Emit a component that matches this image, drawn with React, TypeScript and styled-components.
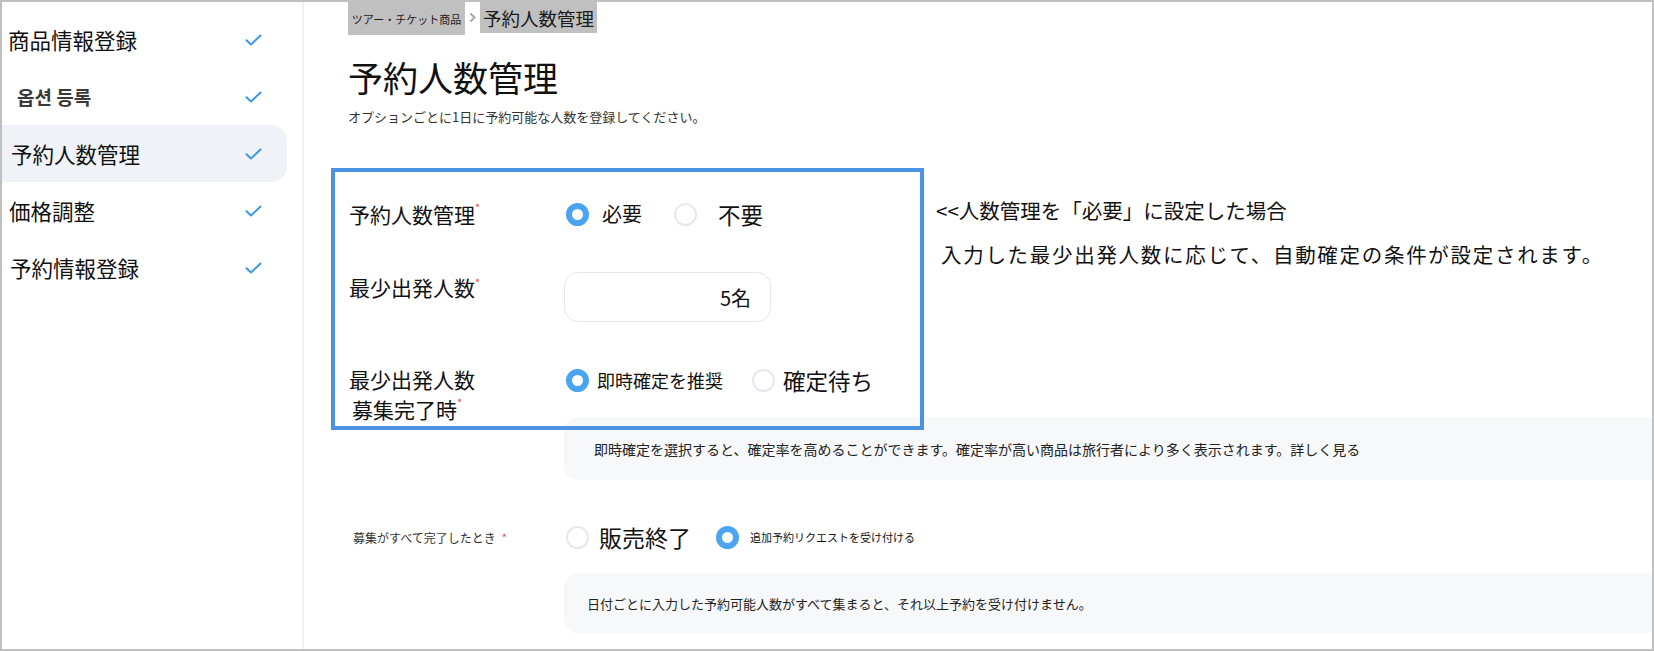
import styled, { createGlobalStyle } from 'styled-components';

// ============================================================================
// Global
// ============================================================================

const GlobalStyle = createGlobalStyle`
  html, body {
    margin: 0;
    padding: 0;
    background: #fff;
  }
  body {
    font-family: "Noto Sans CJK JP", "Noto Sans", sans-serif;
    color: #111;
  }
  * {
    box-sizing: border-box;
  }
`;

// ============================================================================
// Layout
// ============================================================================

const Screen = styled.div`
  width: 1654px;
  height: 651px;
  border: 2px solid #c0c0c0;
  display: flex;
  overflow: hidden;
  background: #fff;
`;

const Sidebar = styled.nav`
  width: 302px;
  flex-shrink: 0;
  border-right: 2px solid #eef1f5;
  padding-top: 9px;
`;

const NavItem = styled.div<{ $active?: boolean; $indent: number }>`
  width: 285px;
  height: 57px;
  display: flex;
  align-items: center;
  justify-content: space-between;
  padding: 0 25px 0 ${(p) => p.$indent}px;
  background: ${(p) => (p.$active ? '#eff2f6' : 'transparent')};
  border-radius: 0 16px 16px 0;
`;

const NavLabel = styled.span<{ $korean?: boolean }>`
  font-family: ${(p) =>
    p.$korean
      ? '"Noto Sans CJK KR", "Noto Sans", sans-serif'
      : '"Noto Sans CJK JP", "Noto Sans", sans-serif'};
  font-size: ${(p) => (p.$korean ? '19px' : '21.5px')};
  font-weight: ${(p) => (p.$korean ? 700 : 400)};
  color: ${(p) => (p.$korean ? '#3a3a3a' : '#111')};
  line-height: 1;
  white-space: pre;
`;

const Main = styled.main`
  flex: 1;
  min-width: 0;
  overflow: hidden;
  padding-left: 44px;
`;

// ============================================================================
// Header
// ============================================================================

const Breadcrumb = styled.div`
  display: flex;
  align-items: flex-start;
`;

const Crumb = styled.span<{ $size: number; $height: number; $width: number }>`
  display: flex;
  align-items: center;
  justify-content: center;
  width: ${(p) => p.$width}px;
  height: ${(p) => p.$height}px;
  background: #c0c0c0;
  font-size: ${(p) => p.$size}px;
  color: #1a1a1a;
  white-space: nowrap;
`;

const CrumbSep = styled.span`
  width: 15px;
  height: 31px;
  display: flex;
  align-items: center;
  justify-content: center;
`;

const Title = styled.h1`
  margin: 21px 0 0;
  font-size: 35px;
  font-weight: 400;
  line-height: 42px;
  color: #111;
`;

const Subtitle = styled.p`
  margin: 10px 0 0;
  font-size: 13px;
  line-height: 18px;
  color: #333;
`;

// ============================================================================
// Form
// ============================================================================

const TopSection = styled.div`
  display: flex;
  align-items: flex-start;
  margin-top: 42px;
`;

// Blue call-out frame drawn around the first three fields
const Highlight = styled.div`
  position: relative;
  z-index: 1;
  width: 593px;
  height: 262px;
  margin-left: -17px;
  padding: 24px 0 0 14px;
  border: 4px solid #4a93e4;
`;

const FieldRow = styled.div<{ $height: number; $gap?: number; $top?: boolean }>`
  display: flex;
  align-items: ${(p) => (p.$top ? 'flex-start' : 'center')};
  height: ${(p) => p.$height}px;
  margin-top: ${(p) => p.$gap ?? 0}px;
`;

const FieldLabel = styled.div<{ $size: number; $line: number; $pad?: number }>`
  width: 215px;
  flex-shrink: 0;
  padding-top: ${(p) => p.$pad ?? 0}px;
  font-size: ${(p) => p.$size}px;
  line-height: ${(p) => p.$line}px;
  color: #111;
`;

const LabelLine = styled.div<{ $indent?: number }>`
  padding-left: ${(p) => p.$indent ?? 0}px;
`;

const Req = styled.span<{ $space?: boolean }>`
  display: inline-block;
  vertical-align: top;
  margin-top: 3px;
  margin-left: ${(p) => (p.$space ? '6px' : '0')};
  font-size: 11px;
  line-height: 1;
  color: #ee4b4b;
`;

const RadioGroup = styled.div<{ $gap: number }>`
  display: flex;
  align-items: center;
  gap: ${(p) => p.$gap}px;
  padding-left: 2px;
  height: 32px;
`;

const RadioOption = styled.label<{ $gap: number }>`
  display: inline-flex;
  align-items: center;
  gap: ${(p) => p.$gap}px;
`;

const RadioDot = styled.span<{ $checked?: boolean }>`
  width: 23px;
  height: 23px;
  flex-shrink: 0;
  border-radius: 50%;
  background: #fff;
  border: ${(p) => (p.$checked ? '6px solid #4ba4f0' : '2px solid #e4e9ef')};
`;

const RadioText = styled.span<{ $size: number }>`
  font-size: ${(p) => p.$size}px;
  line-height: 1;
  color: #111;
  white-space: nowrap;
`;

const CountInput = styled.input`
  width: 207px;
  height: 50px;
  padding: 0 19px 0 0;
  border: 1.5px solid #e3e7ec;
  border-radius: 14px;
  background: #fff;
  font-family: inherit;
  font-size: 20px;
  color: #111;
  text-align: right;
  outline: none;
`;

const SideNotes = styled.div`
  margin-left: 12px;
  padding-top: 27px;
  font-size: 20.5px;
  line-height: 30px;
  color: #111;
  white-space: nowrap;
`;

const SideNote = styled.div<{ $indent?: number; $gap?: number; $spacing?: number }>`
  padding-left: ${(p) => p.$indent ?? 0}px;
  margin-top: ${(p) => p.$gap ?? 0}px;
  letter-spacing: ${(p) => p.$spacing ?? 0}px;
`;

const NoteBox = styled.div<{ $height: number; $gap: number; $pad: number; $size: number }>`
  width: 1100px;
  height: ${(p) => p.$height}px;
  margin: ${(p) => p.$gap}px 0 0 216px;
  padding-left: ${(p) => p.$pad}px;
  display: flex;
  align-items: center;
  background: #f7f8fa;
  border-radius: 14px;
  font-size: ${(p) => p.$size}px;
  color: #222;
  white-space: nowrap;
`;

const PlainRow = styled.div`
  display: flex;
  align-items: center;
  height: 36px;
  margin-top: 39px;
`;

const SmallLabel = styled.div`
  width: 216px;
  flex-shrink: 0;
  padding-left: 5px;
  font-size: 12px;
  color: #333;
`;

// ============================================================================
// Icons
// ============================================================================

function Check() {
  return (
    <svg width="17" height="12" viewBox="0 0 17 12" aria-hidden="true">
      <polyline
        points="1.5,6.2 6,10.5 15.5,1.5"
        fill="none"
        stroke="#3d98e8"
        strokeWidth="2"
        strokeLinecap="round"
        strokeLinejoin="round"
      />
    </svg>
  );
}

function Chevron() {
  return (
    <svg width="7" height="11" viewBox="0 0 7 11" aria-hidden="true">
      <polyline
        points="1.5,1.5 5.5,5.5 1.5,9.5"
        fill="none"
        stroke="#a4a9b0"
        strokeWidth="2"
      />
    </svg>
  );
}

// ============================================================================
// Component
// ============================================================================

const steps = [
  { label: '商品情報登録', indent: 6 },
  { label: '옵션 등록', indent: 15, korean: true },
  { label: '予約人数管理', indent: 9, active: true },
  { label: '価格調整', indent: 7 },
  { label: '予約情報登録', indent: 8 },
];

export default function App() {
  return (
    <>
      <GlobalStyle />
      <Screen>
        <Sidebar>
          {steps.map((s) => (
            <NavItem key={s.label} $active={s.active} $indent={s.indent}>
              <NavLabel $korean={s.korean}>{s.label}</NavLabel>
              <Check />
            </NavItem>
          ))}
        </Sidebar>

        <Main>
          <Breadcrumb>
            <Crumb $size={11} $height={33} $width={117}>
              ツアー・チケット商品
            </Crumb>
            <CrumbSep>
              <Chevron />
            </CrumbSep>
            <Crumb $size={18.5} $height={31} $width={117}>
              予約人数管理
            </Crumb>
          </Breadcrumb>

          <Title>予約人数管理</Title>
          <Subtitle>オプションごとに1日に予約可能な人数を登録してください。</Subtitle>

          <TopSection>
            <Highlight>
              <FieldRow $height={36}>
                <FieldLabel $size={21} $line={30}>
                  予約人数管理<Req>*</Req>
                </FieldLabel>
                <RadioGroup $gap={32}>
                  <RadioOption $gap={13}>
                    <RadioDot $checked />
                    <RadioText $size={20}>必要</RadioText>
                  </RadioOption>
                  <RadioOption $gap={21}>
                    <RadioDot />
                    <RadioText $size={22.5}>不要</RadioText>
                  </RadioOption>
                </RadioGroup>
              </FieldRow>

              <FieldRow $height={50} $gap={40} $top>
                <FieldLabel $size={21} $line={26} $pad={2}>
                  最少出発人数<Req>*</Req>
                </FieldLabel>
                <CountInput readOnly value="5名" />
              </FieldRow>

              <FieldRow $height={60} $gap={42} $top>
                <FieldLabel $size={21} $line={30}>
                  <LabelLine>最少出発人数</LabelLine>
                  <LabelLine $indent={3}>
                    募集完了時<Req>*</Req>
                  </LabelLine>
                </FieldLabel>
                <RadioGroup $gap={29}>
                  <RadioOption $gap={8}>
                    <RadioDot $checked />
                    <RadioText $size={18}>即時確定を推奨</RadioText>
                  </RadioOption>
                  <RadioOption $gap={8}>
                    <RadioDot />
                    <RadioText $size={22.5}>確定待ち</RadioText>
                  </RadioOption>
                </RadioGroup>
              </FieldRow>
            </Highlight>

            <SideNotes>
              <SideNote>&lt;&lt;人数管理を「必要」に設定した場合</SideNote>
              <SideNote $indent={5} $gap={14} $spacing={1.7}>
                入力した最少出発人数に応じて、自動確定の条件が設定されます。
              </SideNote>
            </SideNotes>
          </TopSection>

          <NoteBox $height={63} $gap={-13} $pad={30} $size={14}>
            即時確定を選択すると、確定率を高めることができます。確定率が高い商品は旅行者により多く表示されます。詳しく見る
          </NoteBox>

          <PlainRow>
            <SmallLabel>
              募集がすべて完了したとき<Req $space>*</Req>
            </SmallLabel>
            <RadioGroup $gap={25}>
              <RadioOption $gap={10}>
                <RadioDot />
                <RadioText $size={23}>販売終了</RadioText>
              </RadioOption>
              <RadioOption $gap={11}>
                <RadioDot $checked />
                <RadioText $size={11}>追加予約リクエストを受け付ける</RadioText>
              </RadioOption>
            </RadioGroup>
          </PlainRow>

          <NoteBox $height={60} $gap={18} $pad={23} $size={13}>
            日付ごとに入力した予約可能人数がすべて集まると、それ以上予約を受け付けません。
          </NoteBox>
        </Main>
      </Screen>
    </>
  );
}
